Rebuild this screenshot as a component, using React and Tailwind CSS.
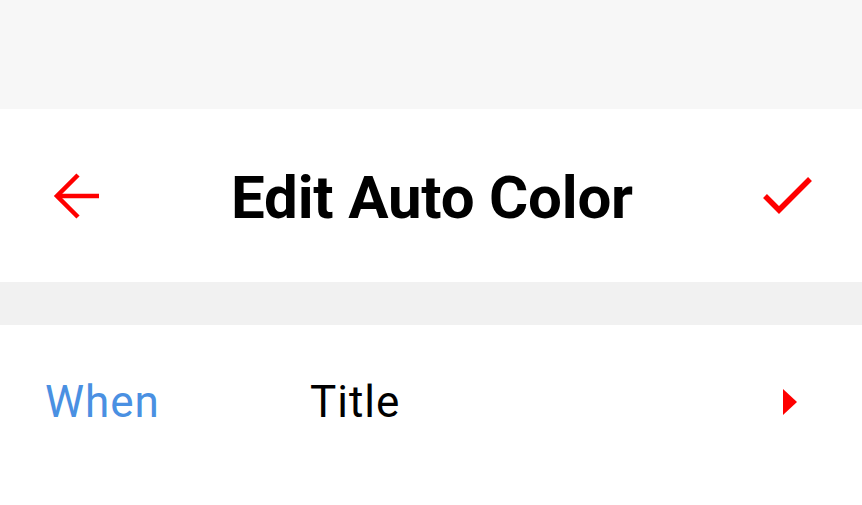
import React from 'react';

const font = { fontFamily: 'Roboto, "Noto Sans", sans-serif' };

const BackIcon = () => (
  <svg width="48" height="48" viewBox="0 0 48 48" fill="none" stroke="#ff0000" strokeWidth="4.5" strokeLinecap="butt" strokeLinejoin="miter">
    <path d="M46 24H6" />
    <path d="M25 3L4 24l21 21" />
  </svg>
);

const CheckIcon = () => (
  <svg width="50" height="40" viewBox="0 0 50 40" fill="none" stroke="#ff0000" strokeWidth="5.5" strokeLinejoin="miter">
    <path d="M2 20l14 14L47 3" />
  </svg>
);

export default function App() {
  return (
    <div className="w-[862px] h-[505px] bg-white flex flex-col overflow-hidden" style={font}>
      {/* status area */}
      <div className="h-[109px] bg-[#f7f7f7]" />

      {/* Header */}
      <div className="h-[173px] flex items-center justify-between px-[53px]">
        <div className="w-[48px] h-[48px] flex items-center">
          <BackIcon />
        </div>
        <h1 className="text-[60px] font-bold text-black leading-none tracking-[-0.2px] mt-[4px]">Edit Auto Color</h1>
        <div className="w-[50px] flex items-center justify-end mr-[-4px]">
          <CheckIcon />
        </div>
      </div>

      {/* divider band */}
      <div className="h-[43px] bg-[#f1f1f1]" />

      {/* Row */}
      <div className="h-[153px] flex items-center pl-[45px] pr-[65px]">
        <span className="w-[265px] text-[44px] text-[#4a90e2] tracking-[1px] leading-none">When</span>
        <span className="flex-1 text-[44px] text-black tracking-[1px] leading-none">Title</span>
        <svg width="14" height="26" viewBox="0 0 14 26">
          <path d="M0 0L14 13L0 26Z" fill="#ff0000" />
        </svg>
      </div>
    </div>
  );
}
